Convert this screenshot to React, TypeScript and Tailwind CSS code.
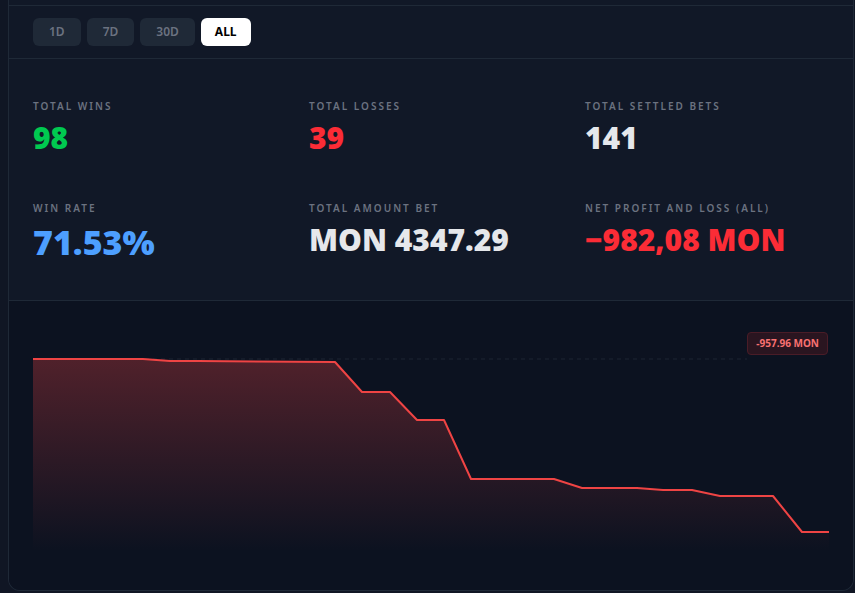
import React from "react";

const ranges = ["1D", "7D", "30D", "ALL"];

const stats = [
  { label: "Total Wins", value: "98", color: "text-[#00c950]", size: "text-[30px] leading-9" },
  { label: "Total Losses", value: "39", color: "text-[#fb2c36]", size: "text-[30px] leading-9" },
  { label: "Total Settled Bets", value: "141", color: "text-[#e5e7eb]", size: "text-[30px] leading-9" },
  { label: "Win Rate", value: "71.53%", color: "text-[#4d9fff]", size: "text-[34px] leading-10" },
  { label: "Total Amount Bet", value: "MON 4347.29", color: "text-[#e5e7eb]", size: "text-[30px] leading-9" },
  { label: "Net Profit and Loss (All)", value: "−982,08 MON", color: "text-[#fb2c36]", size: "text-[30px] leading-9" },
];

// chart points in px, relative to the chart box (796 x 240)
const points: [number, number][] = [
  [0, 33], [55, 33], [110, 33], [137, 35], [165, 35], [302, 36], [329, 66], [357, 66],
  [384, 94], [411, 94], [438, 153], [521, 153], [549, 162], [604, 162], [630, 164],
  [659, 164], [687, 170], [740, 170], [769, 206], [796, 206],
];

const PnlChart = () => {
  const line = points.map(([x, y], i) => `${i ? "L" : "M"}${x} ${y}`).join(" ");
  const area = `${line} L796 225 L0 225 Z`;
  return (
    <div className="relative h-[240px] w-full">
      <svg width="796" height="240" viewBox="0 0 796 240" className="block">
        <defs>
          <linearGradient id="pnlFill" x1="0" y1="33" x2="0" y2="225" gradientUnits="userSpaceOnUse">
            <stop offset="0" stopColor="#ef4444" stopOpacity="0.3" />
            <stop offset="1" stopColor="#ef4444" stopOpacity="0" />
          </linearGradient>
        </defs>
        <line x1="0" y1="33" x2="714" y2="33" stroke="#1c2432" strokeWidth="1" strokeDasharray="4 4" />
        <path d={area} fill="url(#pnlFill)" />
        <path d={line} fill="none" stroke="#ef4444" strokeWidth="2" strokeLinejoin="round" />
      </svg>
      <div className="absolute right-px top-1.5 flex h-[23px] items-center rounded border border-[#4a1c27] bg-[#2a1520] px-2 text-[10px] font-bold text-[#f87171]">
        -957.96 MON
      </div>
    </div>
  );
};

export default function App() {
  return (
    <div
      className="h-[593px] overflow-hidden bg-[#101624] pl-2 pr-px"
      style={{ fontFamily: '"Noto Sans", "Open Sans", sans-serif' }}
    >
      <div className="overflow-hidden rounded-b-xl border-x border-b border-[#1f2937] bg-[#111827]">
        <div className="h-[6px] border-b border-[#1f2937]" />

        <div className="flex gap-1.5 border-b border-[#1f2937] px-6 py-3">
          {ranges.map((r) => (
            <button
              key={r}
              className={
                r === "ALL"
                  ? "h-7 rounded-md bg-white px-[14px] text-[12px] font-bold text-black"
                  : "h-7 rounded-md bg-[#1f2937] px-4 text-[12px] font-semibold text-[#6b7280]"
              }
            >
              {r}
            </button>
          ))}
        </div>

        <div className="grid grid-cols-3 gap-x-8 gap-y-[45px] border-b border-[#1f2937] px-6 pb-[38px] pt-10">
          {stats.map((s) => (
            <div key={s.label}>
              <div className="text-[10px] font-semibold uppercase leading-[15px] tracking-[0.2em] text-[#6b7280]">
                {s.label}
              </div>
              <div className={`mt-1.5 font-black ${s.size} ${s.color}`}>{s.value}</div>
            </div>
          ))}
        </div>

        <div className="bg-[#0c1220] px-6 pb-6 pt-[25px]">
          <PnlChart />
        </div>
      </div>
    </div>
  );
}
